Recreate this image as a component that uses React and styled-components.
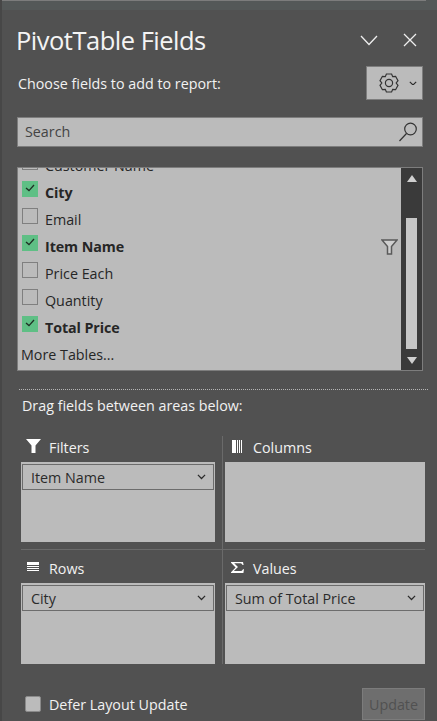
import React from 'react'
import styled, { createGlobalStyle } from 'styled-components'

const GlobalStyle = createGlobalStyle`
    html, body {
        margin: 0;
        padding: 0;
        background: #515151;
    }
    * {
        box-sizing: border-box;
    }
`

const fields = [
    { name: 'City', checked: true },
    { name: 'Email' },
    { name: 'Item Name', checked: true, filtered: true },
    { name: 'Price Each' },
    { name: 'Quantity' },
    { name: 'Total Price', checked: true },
]

const Chevron = ({ size = 9 }) => (
    <svg width={size} height={size * 0.6} viewBox="0 0 10 6" fill="none" stroke="#2b2b2b" strokeWidth="1.4">
        <path d="M1 1l4 4 4-4" />
    </svg>
)

const Gear = () => (
    <svg width="22" height="22" viewBox="0 0 22 22" fill="none" stroke="#333" strokeWidth="1.2">
        <path d="M8.4 2h5.2l1.1 2.7 2.9-.4 2.4 4.4-1.8 2.3 1.8 2.3-2.4 4.4-2.9-.4L13.6 20H8.4l-1.1-2.7-2.9.4L2 13.3l1.8-2.3L2 8.7l2.4-4.4 2.9.4z" />
        <circle cx="11" cy="11" r="3.6" />
    </svg>
)

const Field = ({ name, checked, filtered }) => (
    <FieldRow>
        <CheckBox $checked={checked}>
            {checked && (
                <svg width="10" height="8" viewBox="0 0 10 8" fill="none" stroke="#1f2f25" strokeWidth="1.3">
                    <path d="M1 4l3 2.6L9 1" />
                </svg>
            )}
        </CheckBox>
        <FieldName $checked={checked}>{name}</FieldName>
        {filtered && (
            <FilterMark>
                <svg width="17" height="16" viewBox="0 0 17 16" fill="#cfcfcf" stroke="#5a5a5a" strokeWidth="1.5">
                    <path d="M1 1h15l-5.5 6.5V15h-4V7.5z" />
                </svg>
            </FilterMark>
        )}
    </FieldRow>
)

const Area = ({ icon, label, item }) => (
    <AreaCell>
        <AreaHead>
            <AreaIcon>{icon}</AreaIcon>
            <AreaLabel>{label}</AreaLabel>
        </AreaHead>
        <AreaBox>
            {item && (
                <AreaItem>
                    <span>{item}</span>
                    <Chevron />
                </AreaItem>
            )}
        </AreaBox>
    </AreaCell>
)

const FilterIcon = (
    <svg width="15" height="15" viewBox="0 0 15 15" fill="#fff">
        <path d="M0 0h15L9.5 6.5V14h-4V6.5z" />
    </svg>
)

const ColumnsIcon = (
    <svg width="11" height="13" viewBox="0 0 11 13" fill="#fff">
        <path d="M0 0h4v13H0zM5 0h1v13H5zM7 0h1v13H7zM9 0h1v13H9z" />
    </svg>
)

const RowsIcon = (
    <svg width="12" height="10" viewBox="0 0 12 10" fill="#fff">
        <path d="M0 0h12v3H0zM0 4h12v1H0zM0 6h12v1H0zM0 8h12v1H0z" />
    </svg>
)

const SigmaIcon = (
    <svg width="13" height="11" viewBox="0 0 13 11" fill="#fff">
        <path d="M0 0h12l.6 3h-1C11 1.6 10 1.2 8.5 1.2H3.2L7 5 2.8 9H9c1.5 0 2.4-.5 3-1.8h1L12.4 11H0v-.8L4.6 5.6 0 .8z" />
    </svg>
)

const App = () => {
    return (
        <>
            <GlobalStyle />
            <Pane>
                <TopEdge>
                    <TopLine />
                </TopEdge>
                <Inner>
                    <TitleRow>
                        <Title>PivotTable Fields</Title>
                        <WindowBtns>
                            <svg width="18" height="11" viewBox="0 0 18 11" fill="none" stroke="#eee" strokeWidth="1.3">
                                <path d="M1 1l8 8.5L17 1" />
                            </svg>
                            <svg width="14" height="14" viewBox="0 0 14 14" fill="none" stroke="#eee" strokeWidth="1.3">
                                <path d="M1 1l12 12M13 1L1 13" />
                            </svg>
                        </WindowBtns>
                    </TitleRow>
                    <ChooseRow>
                        <span>Choose fields to add to report:</span>
                        <GearBtn>
                            <Gear />
                            <Chevron size={8} />
                        </GearBtn>
                    </ChooseRow>
                    <SearchBox>
                        <SearchText>Search</SearchText>
                        <svg width="20" height="20" viewBox="0 0 20 20" fill="none" stroke="#333" strokeWidth="1.2">
                            <circle cx="12.5" cy="7" r="5.8" />
                            <path d="M8.5 11.5L1.5 19" />
                        </svg>
                    </SearchBox>
                    <FieldList>
                        <FieldScroll>
                            <CutRow>
                                <FieldRow>
                                    <CheckBox />
                                    <FieldName>Customer Name</FieldName>
                                </FieldRow>
                            </CutRow>
                            {fields.map((f) => (
                                <Field key={f.name} {...f} />
                            ))}
                            <MoreTables>More Tables...</MoreTables>
                        </FieldScroll>
                        <ScrollBar>
                            <ArrowUp />
                            <Thumb />
                            <ArrowDown />
                        </ScrollBar>
                    </FieldList>
                </Inner>
                <Dotted />
                <DragText>Drag fields between areas below:</DragText>
                <Areas>
                    <Area icon={FilterIcon} label="Filters" item="Item Name" />
                    <Area icon={ColumnsIcon} label="Columns" />
                    <Area icon={RowsIcon} label="Rows" item="City" />
                    <Area icon={SigmaIcon} label="Values" item="Sum of Total Price" />
                </Areas>
                <Footer>
                    <DeferBox />
                    <DeferText>Defer Layout Update</DeferText>
                    <UpdateBtn>Update</UpdateBtn>
                </Footer>
            </Pane>
        </>
    )
}

const font = `"Open Sans", "Noto Sans", sans-serif`

const Pane = styled.div`
    position: relative;
    width: 437px;
    height: 721px;
    overflow: hidden;
    background: #515151;
    border-left: 2px solid #474747;
    font-family: ${font};
    font-size: 14.3px;
    color: #f2f2f2;
`

const TopEdge = styled.div`
    height: 10px;
    margin-left: -2px;
    background: #545858;
`

const TopLine = styled.div`
    width: 426px;
    height: 1px;
    background: #7c7c7c;
`

const Inner = styled.div`
    padding: 0 14px 0 15px;
`

const TitleRow = styled.div`
    display: flex;
    align-items: center;
    justify-content: space-between;
    height: 44px;
    margin-top: 7px;
`

const Title = styled.h1`
    margin: 2px 0 0 -1px;
    font-size: 25.5px;
    font-weight: 400;
    letter-spacing: -0.5px;
    color: #f4f4f4;
`

const WindowBtns = styled.div`
    display: flex;
    align-items: center;
    gap: 25px;
    margin-top: 2px;
    padding-right: 6px;
`

const ChooseRow = styled.div`
    display: flex;
    align-items: center;
    justify-content: space-between;
    height: 34px;
    margin-top: 5px;
    padding-left: 1px;
`

const GearBtn = styled.div`
    display: flex;
    align-items: center;
    gap: 9px;
    width: 57px;
    height: 34px;
    padding-left: 11px;
    background: #bbbbbb;
    border: 1px solid #7d7d7d;
`

const SearchBox = styled.div`
    display: flex;
    align-items: center;
    justify-content: space-between;
    height: 30px;
    margin-top: 17px;
    padding: 0 4px 0 7px;
    background: #bbbbbb;
    border: 1px solid #7d7d7d;
    color: #444;
`

const SearchText = styled.span`
    margin-top: -2px;
`

const FieldList = styled.div`
    display: flex;
    height: 204px;
    margin-top: 20px;
    background: #bbbbbb;
    border: 1px solid #7d7d7d;
`

const FieldScroll = styled.div`
    flex: 1;
    min-width: 0;
    overflow: hidden;
    color: #262626;
`

const CutRow = styled.div`
    height: 11px;
    overflow: hidden;
    display: flex;
    align-items: flex-end;
`

const FieldRow = styled.div`
    display: flex;
    align-items: center;
    flex: none;
    width: 100%;
    height: 27px;
    padding-left: 4px;
`

const CheckBox = styled.div`
    display: flex;
    align-items: center;
    justify-content: center;
    flex: none;
    width: 16px;
    height: 16px;
    margin-top: -7px;
    padding-bottom: 3px;
    background: ${(p) => (p.$checked ? '#5fbf85' : 'transparent')};
    border: ${(p) => (p.$checked ? 'none' : '1px solid #7f7f7f')};
`

const FieldName = styled.span`
    margin-left: 7px;
    letter-spacing: ${(p) => (p.$checked ? '-0.1px' : '0')};
    font-weight: ${(p) => (p.$checked ? 700 : 400)};
`

const FilterMark = styled.span`
    display: flex;
    margin-left: auto;
    margin-right: 3px;
`

const MoreTables = styled.div`
    height: 27px;
    padding-left: 3px;
    line-height: 27px;
`

const ScrollBar = styled.div`
    display: flex;
    flex-direction: column;
    align-items: center;
    flex: none;
    width: 21px;
    background: #3a3a3a;
`

const ArrowUp = styled.div`
    flex: none;
    margin-top: 7px;
    width: 0;
    height: 0;
    border-left: 5.5px solid transparent;
    border-right: 5.5px solid transparent;
    border-bottom: 7px solid #cfcfcf;
`

const ArrowDown = styled.div`
    flex: none;
    margin-bottom: 6px;
    width: 0;
    height: 0;
    border-left: 5.5px solid transparent;
    border-right: 5.5px solid transparent;
    border-top: 7px solid #cfcfcf;
`

const Thumb = styled.div`
    flex: 1;
    width: 11px;
    margin: 36px 0 8px;
    background: #c6c6c6;
`

const Dotted = styled.div`
    margin: 18px 9px 0 17px;
    border-top: 1px dotted #b5b5b5;
`

const DragText = styled.div`
    margin: 6px 0 0 20px;
    line-height: 20px;
`

const Areas = styled.div`
    display: grid;
    grid-template-columns: 202px 202px;
    grid-template-rows: 114px 114px;
    margin: 20px 0 0 19px;
`

const AreaCell = styled.div`
    display: flex;
    flex-direction: column;

    &:nth-child(odd) {
        border-right: 1px solid #6a6a6a;
        padding-right: 7px;
    }
    &:nth-child(even) {
        padding-left: 2px;
    }
    &:nth-child(-n + 2) {
        border-bottom: 1px solid #6a6a6a;
        padding-bottom: 7px;
    }
    &:nth-child(n + 3) {
        padding-top: 7px;
    }
`

const AreaHead = styled.div`
    display: flex;
    align-items: center;
    flex: none;
    height: 26px;
`

const AreaIcon = styled.span`
    display: flex;
    align-items: center;
    justify-content: center;
    width: 24px;
    margin-top: -6px;
`

const AreaLabel = styled.span`
    margin: -3px 0 0 4px;
`

const AreaBox = styled.div`
    flex: 1;
    padding: 2px 1px;
    background: #bbbbbb;
`

const AreaItem = styled.div`
    display: flex;
    align-items: center;
    justify-content: space-between;
    height: 26px;
    padding: 0 7px 0 8px;
    border: 1px solid #6c6c6c;
    color: #2b2b2b;
`

const Footer = styled.div`
    display: flex;
    align-items: center;
    height: 32px;
    margin: 24px 0 0 23px;
`

const DeferBox = styled.div`
    width: 16px;
    height: 16px;
    background: #bbbbbb;
    border: 1px solid #8a8a8a;
    border-radius: 2px;
`

const DeferText = styled.span`
    margin-left: 8px;
`

const UpdateBtn = styled.div`
    display: flex;
    align-items: center;
    justify-content: center;
    width: 63px;
    height: 32px;
    margin-left: auto;
    margin-right: 12px;
    background: #6e6e6e;
    border: 1px solid #7c7c7c;
    color: #515151;
`

export default App
